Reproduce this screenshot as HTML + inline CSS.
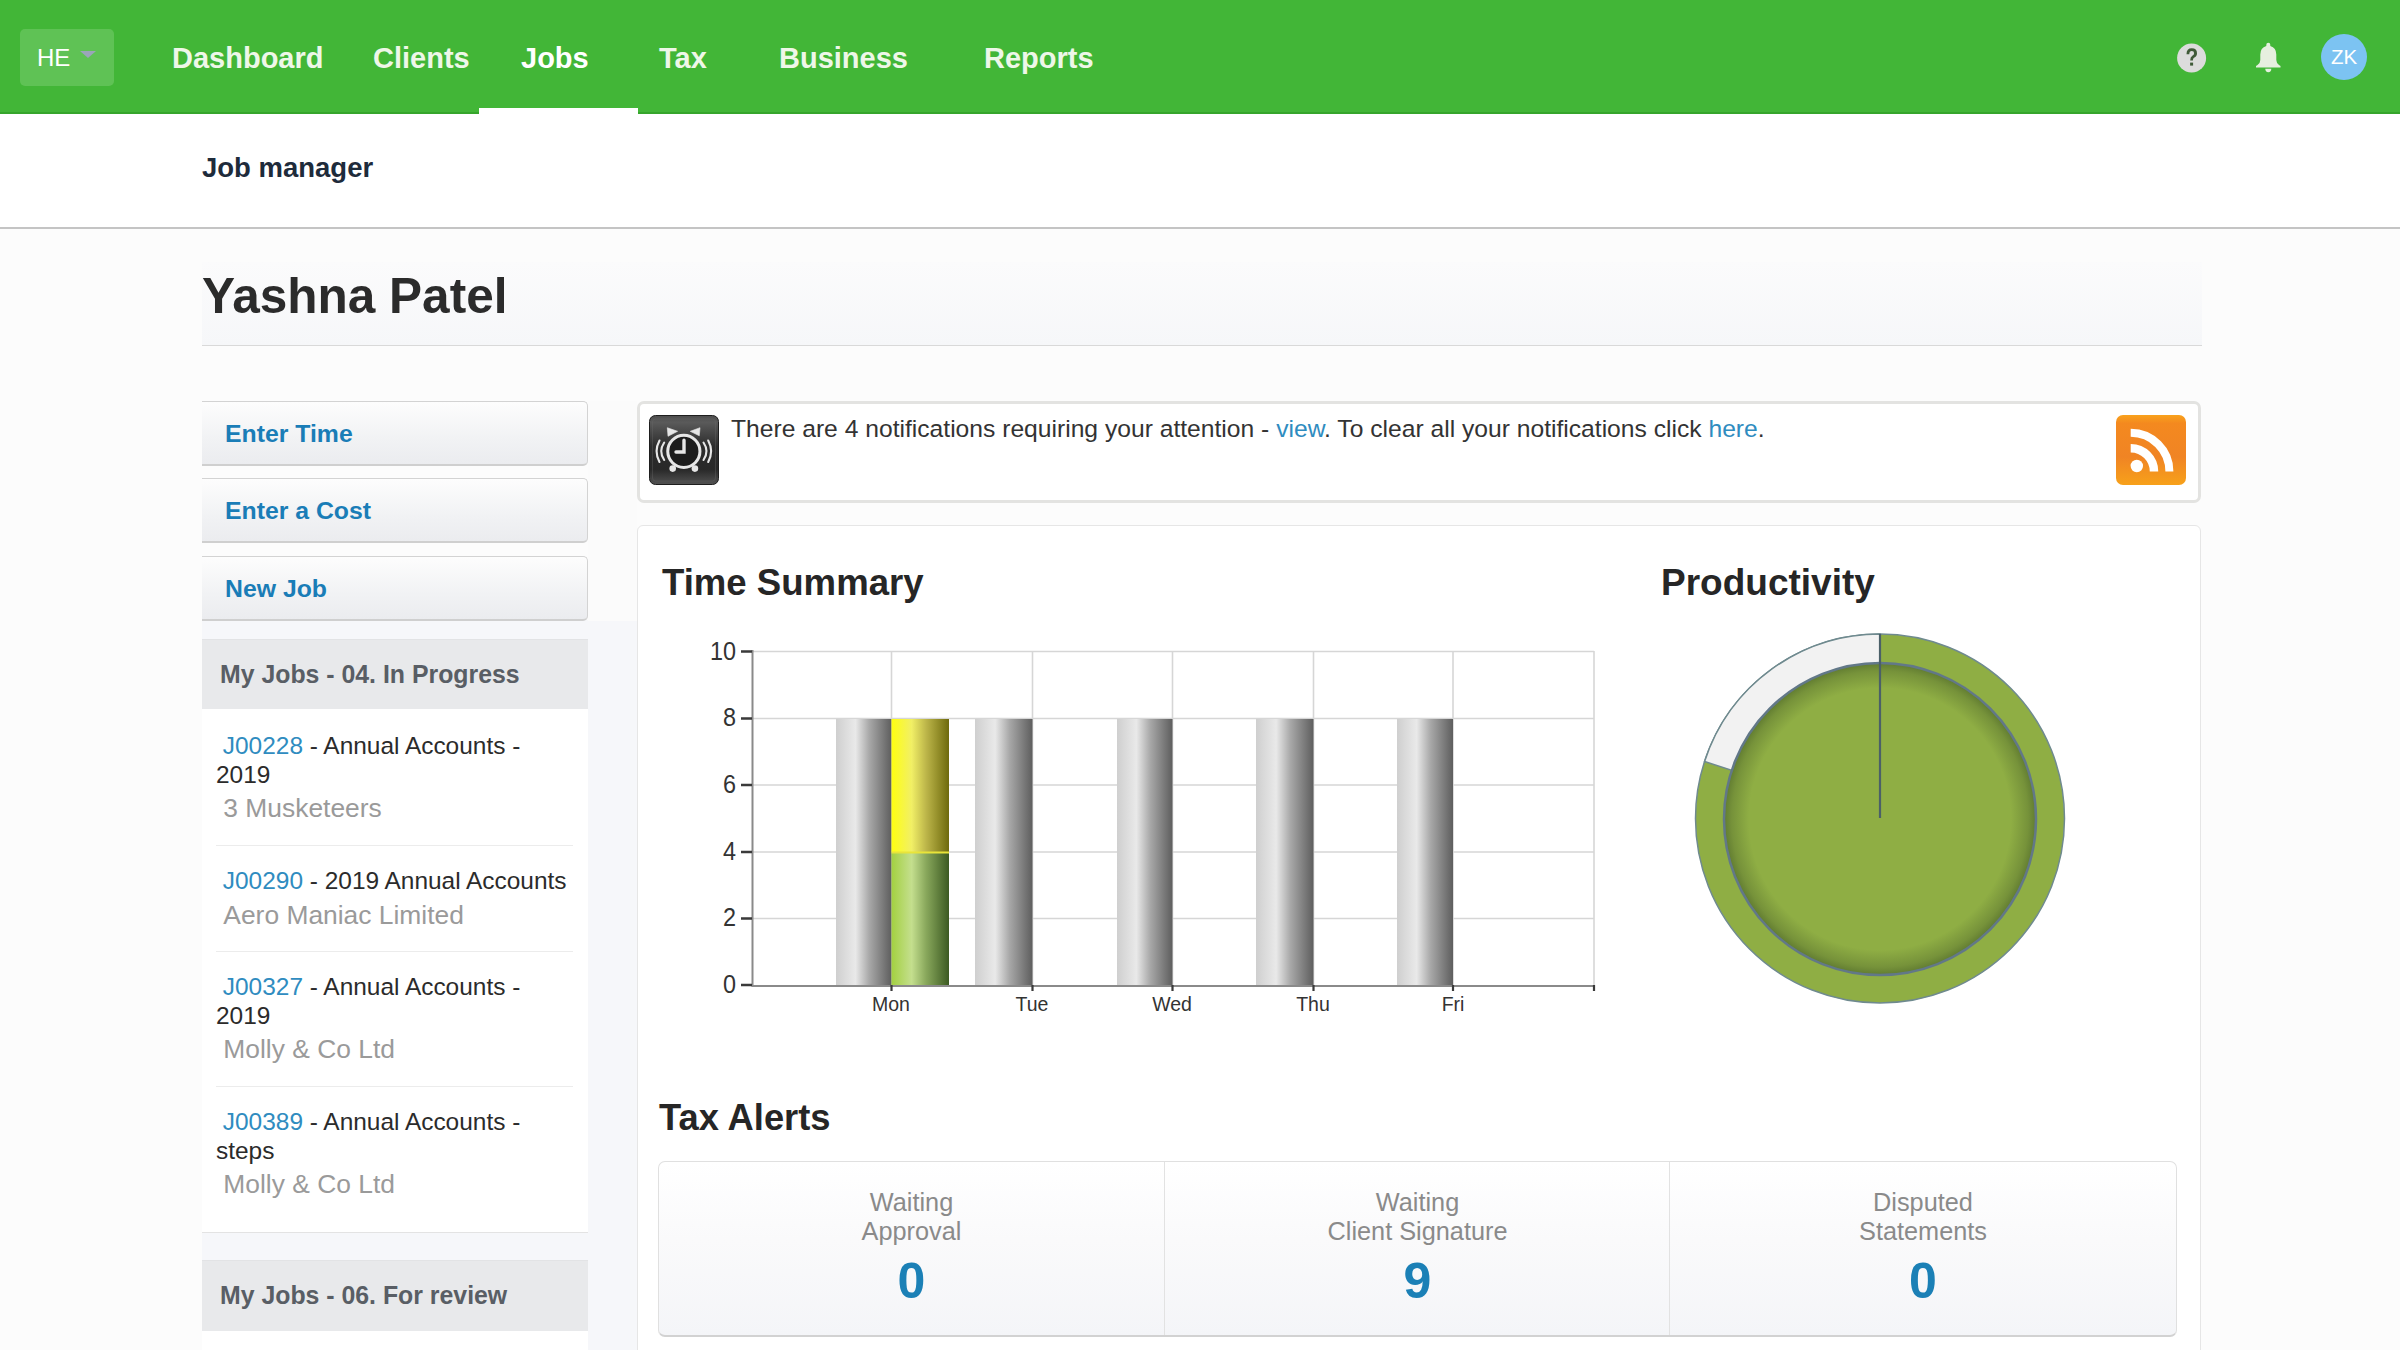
<!DOCTYPE html>
<html><head><meta charset="utf-8">
<style>
*{box-sizing:border-box}
html,body{margin:0;padding:0;width:2400px;height:1350px;overflow:hidden;background:#fcfcfc;font-family:"Liberation Sans",sans-serif;position:relative}
.abs{position:absolute}
#nav{left:0;top:0;width:2400px;height:114px;background:#42b637;border-bottom:2px solid #36a52c}
#he{left:20px;top:29px;width:94px;height:57px;background:#5fc255;border-radius:5px}
#he span{position:absolute;left:17px;top:15px;font-size:24px;color:#fff}
#he i{position:absolute;left:60px;top:22px;width:0;height:0;border-left:8px solid transparent;border-right:8px solid transparent;border-top:7px solid #a99dd2;opacity:.8}
.nv{position:absolute;top:41px;font-size:29px;font-weight:bold;color:#eef7e8;line-height:34px;white-space:nowrap}
#uline{left:479px;top:108px;width:159px;height:6px;background:#fff}
#sub{left:0;top:114px;width:2400px;height:115px;background:#fff;border-bottom:2px solid #c4c4c4}
#jm{left:202px;font-size:27.5px;font-weight:bold;color:#1e2b3b;line-height:34px}
#hdr{left:202px;top:262px;width:2000px;height:84px;background:linear-gradient(#fbfbfc,#f6f7f9);border-bottom:1px solid #d9d9d9}
#name{left:202px;top:266px;font-size:49.5px;font-weight:bold;color:#2b2b2b;line-height:60px;white-space:nowrap}
.btn{position:absolute;left:202px;width:386px;height:65px;border:1px solid #d3d3d3;border-left:none;border-bottom:2px solid #cfcfcf;border-radius:0 5px 5px 0;background:linear-gradient(#fdfdfd,#f1f2f4 60%,#ebecef)}
.btn span{position:absolute;left:23px;top:17px;font-size:24.8px;font-weight:bold;color:#1a7db7;line-height:30px;white-space:nowrap}
.mjh{position:absolute;left:202px;width:386px;height:70px;background:#e8e9eb;box-shadow:0 -1px 0 #e2e3e5}
.mjh span{position:absolute;left:18px;top:20px;font-size:24.85px;font-weight:bold;color:#595e65;line-height:30px;white-space:nowrap}
#jobs{left:202px;top:709px;width:386px;height:524px;background:#fff;border-bottom:1px solid #e3e3e3}
.job{position:absolute;left:14px;width:357px;white-space:nowrap;color:#2b2b2b}
.job .t{font-size:24.45px;line-height:28.5px}
.job .t a{color:#2f8cc0;text-decoration:none}
.job .c{font-size:26.4px;line-height:32px;color:#9a9a9a;margin-top:3px}
.sep{position:absolute;left:14px;width:357px;height:1px;background:#ececec}
#notif{left:637px;top:401px;width:1564px;height:102px;background:#fff;border:3px solid #e3e3e1;border-radius:7px}
#ntext{left:731px;top:412px;font-size:24.65px;color:#333;line-height:34px;white-space:nowrap}
#ntext a{color:#2f8cc0;text-decoration:none}
#panel{left:637px;top:525px;width:1564px;height:900px;background:#fff;border:1px solid #e6e6e6;border-radius:6px}
.h2{position:absolute;font-size:36.6px;font-weight:bold;color:#262626;line-height:44px;white-space:nowrap}
#tax{left:658px;top:1161px;width:1519px;height:176px;border:1px solid #e0e0e0;border-bottom:2px solid #d2d2d2;border-radius:7px;background:linear-gradient(#ffffff,#fafafb 45%,#f4f5f8)}
.tc{position:absolute;top:0;height:173px;text-align:center}
.tc .l{position:absolute;left:0;right:0;top:26px;font-size:25.3px;line-height:28.5px;color:#8a8a8a}
.tc .n{position:absolute;left:0;right:0;top:91px;font-size:50px;font-weight:bold;line-height:56px;color:#1b80b6}
.dv{position:absolute;top:0;width:1px;height:173px;background:#e2e2e2}
</style></head><body>
<div id="nav" class="abs">
  <div id="he" class="abs"><span>HE</span><i></i></div>
  <div class="nv" style="left:172px">Dashboard</div>
  <div class="nv" style="left:373px">Clients</div>
  <div class="nv" style="left:521px;color:#fff">Jobs</div>
  <div class="nv" style="left:659px">Tax</div>
  <div class="nv" style="left:779px">Business</div>
  <div class="nv" style="left:984px">Reports</div>
  <svg class="abs" style="left:2170px;top:36px" width="44" height="44" viewBox="0 0 44 44">
    <circle cx="21.6" cy="22" r="14.5" fill="#dcdcdc"/>
    <path d="M16.5 18.2 Q16.5 12.3 21.8 12.3 Q27 12.3 27 17.3 Q27 20.3 24 21.8 Q22.9 22.4 22.9 24.6 L20.2 24.6 Q20.2 21 22.3 19.8 Q24.1 18.8 24.1 17.3 Q24.1 15 21.8 15 Q19.3 15 19.3 18.2 Z" fill="#3f5a38"/>
    <rect x="20.1" y="26.6" width="3" height="3" fill="#3f5a38"/>
  </svg>
  <svg class="abs" style="left:2250px;top:38px" width="40" height="40" viewBox="0 0 40 40">
    <path d="M16.3 6.7 Q16.3 4.7 18.3 4.7 Q20.3 4.7 20.3 6.7 L20.3 8 Q26.3 9.8 26.3 16.5 L26.3 22 Q26.3 25 29 27 L30.5 28 L30.5 29.4 L6 29.4 L6 28 L7.5 27 Q10.3 25 10.3 22 L10.3 16.5 Q10.3 9.8 16.3 8 Z" fill="#e6efdf"/>
    <path d="M15.3 30.8 L21.3 30.8 Q21.3 34.2 18.3 34.2 Q15.3 34.2 15.3 30.8 Z" fill="#e6efdf"/>
  </svg>
  <div class="abs" style="left:2321px;top:34px;width:46px;height:46px;border-radius:50%;background:#7cc3f2;color:#fff;font-size:20.5px;line-height:46px;text-align:center">ZK</div>
</div>
<div id="uline" class="abs"></div>
<div id="sub" class="abs"><div id="jm" class="abs" style="top:37px">Job manager</div></div>

<div id="hdr" class="abs"></div>
<div id="name" class="abs">Yashna Patel</div>

<div class="abs" style="left:202px;top:620px;width:435px;height:730px;background:#f6f7fa"></div>
<div class="abs" style="left:588px;top:401px;width:49px;height:220px;background:#fbfbfb"></div>
<div class="btn" style="top:401px"><span>Enter Time</span></div>
<div class="btn" style="top:478px"><span>Enter a Cost</span></div>
<div class="btn" style="top:556px"><span>New Job</span></div>

<div class="mjh" style="top:640px"><span>My Jobs - 04. In Progress</span></div>
<div id="jobs" class="abs">
  <div class="job" style="top:23px"><div class="t">&nbsp;<a>J00228</a> - Annual Accounts -<br>2019</div><div class="c">&nbsp;3 Musketeers</div></div>
  <div class="sep" style="top:136px"></div>
  <div class="job" style="top:158px"><div class="t">&nbsp;<a>J00290</a> - 2019 Annual Accounts</div><div class="c">&nbsp;Aero Maniac Limited</div></div>
  <div class="sep" style="top:242px"></div>
  <div class="job" style="top:264px"><div class="t">&nbsp;<a>J00327</a> - Annual Accounts -<br>2019</div><div class="c">&nbsp;Molly &amp; Co Ltd</div></div>
  <div class="sep" style="top:377px"></div>
  <div class="job" style="top:399px"><div class="t">&nbsp;<a>J00389</a> - Annual Accounts -<br>steps</div><div class="c">&nbsp;Molly &amp; Co Ltd</div></div>
</div>
<div class="mjh" style="top:1261px"><span>My Jobs - 06. For review</span></div>
<div class="abs" style="left:202px;top:1331px;width:386px;height:30px;background:#fff"></div>

<div id="notif" class="abs"></div>
<svg class="abs" style="left:649px;top:415px" width="70" height="70" viewBox="0 0 70 70">
  <defs><linearGradient id="ag" x1="0" y1="0" x2="0" y2="1"><stop offset="0" stop-color="#4e4e4e"/><stop offset="0.1" stop-color="#5a5a5a"/><stop offset="0.45" stop-color="#2c2c2c"/><stop offset="0.78" stop-color="#282828"/><stop offset="1" stop-color="#525252"/></linearGradient></defs>
  <rect x="0.5" y="0.5" width="69" height="69" rx="6" fill="url(#ag)" stroke="#1e1e1e" stroke-width="1"/>
  <rect x="3.5" y="4" width="63" height="62" rx="3" fill="none" stroke="#6a6a6a" stroke-opacity=".35" stroke-width="1"/>
  <circle cx="34.85" cy="36.35" r="14.5" fill="#1c1c1c"/>
  <g fill="none" stroke="#e6e6e6" stroke-linecap="round">
    <circle cx="34.85" cy="36.35" r="16.1" stroke-width="3"/>
    <path d="M35 25.3 L35 37 L27 37" stroke-width="3.4"/>
    <path d="M10.5 25.5 Q4.6 36.3 10.5 47" stroke-width="2.1"/>
    <path d="M15.2 27.5 Q9.2 36.3 15.2 45" stroke-width="2.1"/>
    <path d="M59.2 25.5 Q65.1 36.3 59.2 47" stroke-width="2.1"/>
    <path d="M54.5 27.5 Q60.5 36.3 54.5 45" stroke-width="2.1"/>
  </g>
  <path d="M18.3 12.7 L28.6 16.3 L19 21.3 Z" fill="#e6e6e6" stroke="#e6e6e6" stroke-width="0.6" stroke-linejoin="round"/>
  <path d="M51 12.7 L41.2 16.3 L50.3 20.8 Z" fill="#e6e6e6" stroke="#e6e6e6" stroke-width="0.6" stroke-linejoin="round"/>
  <circle cx="23.7" cy="53.6" r="3.3" fill="#e6e6e6"/>
  <circle cx="45.9" cy="53.6" r="3.3" fill="#e6e6e6"/>
</svg>
<div id="ntext" class="abs">There are 4 notifications requiring your attention - <a>view</a>. To clear all your notifications click <a>here</a>.</div>
<svg class="abs" style="left:2116px;top:415px" width="70" height="70" viewBox="0 0 70 70">
  <defs><linearGradient id="rg" x1="0" y1="0" x2="0" y2="1"><stop offset="0" stop-color="#f9a21c"/><stop offset="0.12" stop-color="#f4891f"/><stop offset="0.6" stop-color="#f08424"/><stop offset="1" stop-color="#f7a11a"/></linearGradient></defs>
  <rect x="0" y="0" width="70" height="70" rx="7" fill="url(#rg)"/>
  <circle cx="20.8" cy="51" r="6.2" fill="#fff"/>
  <path d="M14.7 33.2 A23.3 23.3 0 0 1 38 56.5" fill="none" stroke="#fff" stroke-width="8.5"/>
  <path d="M14.7 17.8 A38.7 38.7 0 0 1 53.4 56.5" fill="none" stroke="#fff" stroke-width="8"/>
</svg>

<div id="panel" class="abs"></div>
<div class="h2" style="left:662px;top:561px">Time Summary</div>
<div class="h2" style="left:1661px;top:561px;font-size:37px">Productivity</div>

<!-- chart -->
<svg class="abs" style="left:690px;top:630px" width="930" height="400" viewBox="690 630 930 400">
  <defs>
    <linearGradient id="gb" x1="0" y1="0" x2="1" y2="0"><stop offset="0" stop-color="#cfcfcf"/><stop offset="0.35" stop-color="#e9e9e9"/><stop offset="0.6" stop-color="#a8a8a8"/><stop offset="1" stop-color="#5e5e5e"/></linearGradient>
    <linearGradient id="yb" x1="0" y1="0" x2="1" y2="0"><stop offset="0" stop-color="#ffff10"/><stop offset="0.35" stop-color="#f1ef66"/><stop offset="0.6" stop-color="#bdb64a"/><stop offset="1" stop-color="#6e6a0c"/></linearGradient>
    <linearGradient id="grb" x1="0" y1="0" x2="1" y2="0"><stop offset="0" stop-color="#a3d040"/><stop offset="0.35" stop-color="#c4df8e"/><stop offset="0.6" stop-color="#89a85c"/><stop offset="1" stop-color="#3c5a22"/></linearGradient>
  </defs>
  <g stroke="#d6d6d6" stroke-width="1.6">
    <path d="M753 651.5 H1594 M753 718.5 H1594 M753 785 H1594 M753 852 H1594 M753 918.5 H1594"/>
    <path d="M891.5 651 V985 M1032.5 651 V985 M1172.5 651 V985 M1313.5 651 V985 M1453 651 V985 M1594 651 V985"/>
  </g>
  <rect x="836" y="719" width="55.5" height="266" fill="url(#gb)"/>
  <rect x="891.5" y="719" width="57.5" height="133" fill="url(#yb)"/>
  <rect x="891.5" y="852" width="57.5" height="133" fill="url(#grb)"/>
  <path d="M891.5 852.5 H949" stroke="#e8e43a" stroke-width="2"/>
  <rect x="975" y="719" width="57.5" height="266" fill="url(#gb)"/>
  <rect x="1117" y="719" width="55.5" height="266" fill="url(#gb)"/>
  <rect x="1256" y="719" width="57.5" height="266" fill="url(#gb)"/>
  <rect x="1397" y="719" width="56" height="266" fill="url(#gb)"/>
  <g fill="none">
    <path d="M752.5 650 V986 H1595" stroke="#8a8a8a" stroke-width="2"/>
    <path d="M741 651.5 H752 M741 718.5 H752 M741 785 H752 M741 852 H752 M741 918.5 H752 M741 985 H752" stroke="#3a3a3a" stroke-width="2.6"/>
    <path d="M891.5 985 V991 M1032.5 985 V991 M1172.5 985 V991 M1313.5 985 V991 M1453 985 V991 M1594 985 V991" stroke="#3a3a3a" stroke-width="2.2"/>
  </g>
  <g font-family="Liberation Sans" font-size="26" fill="#333" text-anchor="end" transform="translate(736 0) scale(0.9 1)">
    <text x="0" y="660.5">10</text><text x="0" y="726.5">8</text><text x="0" y="793">6</text><text x="0" y="860">4</text><text x="0" y="926.5">2</text><text x="0" y="993">0</text>
  </g>
  <g font-family="Liberation Sans" font-size="19.5" fill="#333" text-anchor="middle">
    <text x="891" y="1011">Mon</text><text x="1032" y="1011">Tue</text><text x="1172" y="1011">Wed</text><text x="1313" y="1011">Thu</text><text x="1453" y="1011">Fri</text>
  </g>
</svg>

<!-- pie -->
<svg class="abs" style="left:1680px;top:620px" width="400" height="400" viewBox="1680 620 400 400">
  <defs>
    <radialGradient id="pg" cx="1880" cy="819" r="156" gradientUnits="userSpaceOnUse">
      <stop offset="0" stop-color="#8fae44"/><stop offset="0.84" stop-color="#8fae44"/><stop offset="0.95" stop-color="#76923a"/><stop offset="1" stop-color="#617c31"/>
    </radialGradient>
  </defs>
  <circle cx="1880" cy="818.5" r="184.5" fill="#8fae44" stroke="#6f8a8f" stroke-width="1.5"/>
  <path d="M1880 818.5 L1880 634 A184.5 184.5 0 0 0 1704.6 761.5 Z" fill="#f2f2f2" stroke="#6f8a8f" stroke-width="1.5"/>
  <circle cx="1880" cy="819" r="156" fill="url(#pg)" stroke="#627888" stroke-width="2.5"/>
  <path d="M1880 634 V818" stroke="#4b6068" stroke-width="2.2"/>
</svg>

<div class="h2" style="left:659px;top:1096px;font-size:36.3px">Tax Alerts</div>
<div id="tax" class="abs">
  <div class="tc" style="left:0;width:505px"><div class="l">Waiting<br>Approval</div><div class="n">0</div></div>
  <div class="dv" style="left:505px"></div>
  <div class="tc" style="left:506px;width:505px"><div class="l">Waiting<br>Client Signature</div><div class="n">9</div></div>
  <div class="dv" style="left:1010px"></div>
  <div class="tc" style="left:1011px;width:506px"><div class="l">Disputed<br>Statements</div><div class="n">0</div></div>
</div>
</body></html>
